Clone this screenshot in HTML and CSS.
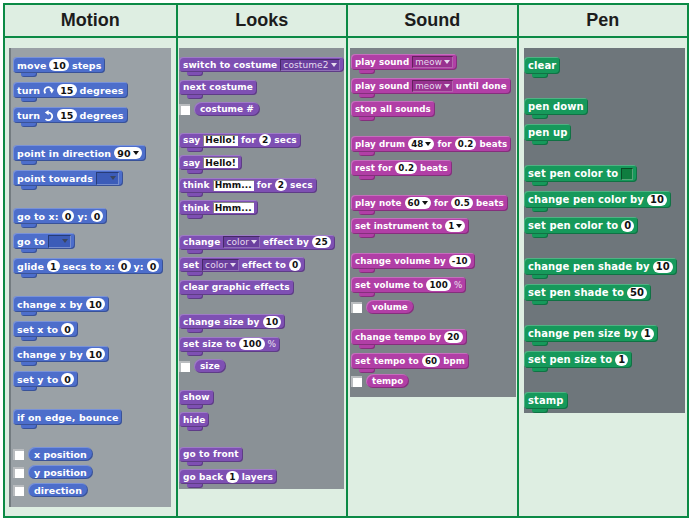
FILE: index.html
```html
<!DOCTYPE html>
<html lang="en">

<head>
    <meta charset="UTF-8">
    <title>Scratch block palettes</title>
    <link rel="stylesheet" href="styles.css">
</head>

<body>
    <div class="chart">
        <div class="head">Motion</div>
        <div class="head">Looks</div>
        <div class="head">Sound</div>
        <div class="head">Pen</div>

        <!-- Motion -->
        <div class="cell">
            <div class="palette motion">
                <div class="blk">move <span class="num">10</span> steps</div>
                <div class="blk">turn
                    <svg class="ico" viewBox="0 0 11 11"><path d="M2.4 8.4 A3.8 3.8 0 1 1 9 5.2" fill="none" stroke="#fff" stroke-width="1.8"/><path d="M6.4 4.6 L11 4.6 L8.8 8.4 Z" fill="#fff"/></svg>
                    <span class="num">15</span> degrees</div>
                <div class="blk">turn
                    <svg class="ico" viewBox="0 0 11 11"><path d="M5 2.6 A3.8 3.8 0 1 1 2.6 9" fill="none" stroke="#fff" stroke-width="1.8"/><path d="M5.6 0 L1.8 2.6 L5.6 5.2 Z" fill="#fff"/></svg>
                    <span class="num">15</span> degrees</div>
                <div class="blk grp">point in direction <span class="num drop">90</span></div>
                <div class="blk">point towards <span class="menu"></span></div>
                <div class="blk grp">go to x: <span class="num">0</span> y: <span class="num">0</span></div>
                <div class="blk">go to <span class="menu"></span></div>
                <div class="blk">glide <span class="num">1</span> secs to x: <span class="num">0</span> y: <span class="num">0</span></div>
                <div class="blk grp">change x by <span class="num">10</span></div>
                <div class="blk">set x to <span class="num">0</span></div>
                <div class="blk">change y by <span class="num">10</span></div>
                <div class="blk">set y to <span class="num">0</span></div>
                <div class="blk grp">if on edge, bounce</div>
                <div class="reps grp">
                    <div class="rep-row"><span class="check"></span><span class="rep">x position</span></div>
                    <div class="rep-row"><span class="check"></span><span class="rep">y position</span></div>
                    <div class="rep-row"><span class="check"></span><span class="rep">direction</span></div>
                </div>
            </div>
        </div>

        <!-- Looks -->
        <div class="cell">
            <div class="palette looks">
                <div class="blk">switch to costume <span class="dd">costume2</span></div>
                <div class="blk">next costume</div>
                <div class="rep-row"><span class="check"></span><span class="rep">costume #</span></div>
                <div class="blk grp sm">say <span class="txt">Hello!</span> for <span class="num">2</span> secs</div>
                <div class="blk">say <span class="txt">Hello!</span></div>
                <div class="blk">think <span class="txt">Hmm...</span> for <span class="num">2</span> secs</div>
                <div class="blk">think <span class="txt">Hmm...</span></div>
                <div class="blk grp">change <span class="dd">color</span> effect by <span class="num">25</span></div>
                <div class="blk">set <span class="dd">color</span> effect to <span class="num">0</span></div>
                <div class="blk">clear graphic effects</div>
                <div class="blk grp">change size by <span class="num">10</span></div>
                <div class="blk">set size to <span class="num">100</span> <span class="thin">%</span></div>
                <div class="rep-row"><span class="check"></span><span class="rep">size</span></div>
                <div class="blk grp sm">show</div>
                <div class="blk">hide</div>
                <div class="blk grp">go to front</div>
                <div class="blk">go back <span class="num">1</span> layers</div>
            </div>
        </div>

        <!-- Sound -->
        <div class="cell">
            <div class="palette sound">
                <div class="blk">play sound <span class="dd">meow</span></div>
                <div class="blk">play sound <span class="dd">meow</span> until done</div>
                <div class="blk">stop all sounds</div>
                <div class="blk grp">play drum <span class="num drop">48</span> for <span class="num">0.2</span> beats</div>
                <div class="blk">rest for <span class="num">0.2</span> beats</div>
                <div class="blk grp">play note <span class="num drop">60</span> for <span class="num">0.5</span> beats</div>
                <div class="blk">set instrument to <span class="num drop">1</span></div>
                <div class="blk grp">change volume by <span class="num">-10</span></div>
                <div class="blk">set volume to <span class="num">100</span> <span class="thin">%</span></div>
                <div class="rep-row"><span class="check"></span><span class="rep">volume</span></div>
                <div class="blk grp sm">change tempo by <span class="num">20</span></div>
                <div class="blk">set tempo to <span class="num">60</span> bpm</div>
                <div class="rep-row last"><span class="check"></span><span class="rep">tempo</span></div>
            </div>
        </div>

        <!-- Pen -->
        <div class="cell">
            <div class="palette pen">
                <div class="blk">clear</div>
                <div class="blk grp">pen down</div>
                <div class="blk">pen up</div>
                <div class="blk grp">set pen color to <span class="swatch"></span></div>
                <div class="blk">change pen color by <span class="num">10</span></div>
                <div class="blk">set pen color to <span class="num">0</span></div>
                <div class="blk grp">change pen shade by <span class="num">10</span></div>
                <div class="blk">set pen shade to <span class="num">50</span></div>
                <div class="blk grp">change pen size by <span class="num">1</span></div>
                <div class="blk">set pen size to <span class="num">1</span></div>
                <div class="blk grp">stamp</div>
            </div>
        </div>
    </div>
</body>

</html>
```

FILE: styles.css
```css
body {
    margin: 0;
    background-color: #fff;
    font-family: 'DejaVu Sans', sans-serif;
}

.chart {
    display: grid;
    grid-template-columns: repeat(4, 1fr);
    width: 682px;
    margin: 3px;
    border: 2px solid #0b8a45;
    background-color: #deeee2;
}

.head {
    height: 31px;
    display: flex;
    align-items: center;
    justify-content: center;
    border-bottom: 2px solid #0b8a45;
    font-family: 'Liberation Sans', Arial, sans-serif;
    font-weight: bold;
    font-size: 18px;
    color: #1c1c1c;
}

.head + .head,
.cell + .cell {
    border-left: 2px solid #0b8a45;
}

.cell {
    height: 478px;
    box-sizing: border-box;
    padding-top: 10px;
}

/* palette panels */
.palette {
    box-sizing: border-box;
    display: flex;
    flex-direction: column;
    align-items: flex-start;
    gap: var(--gap);
    background-color: var(--bg);
    color: #fff;
    font-weight: bold;
    font-size: var(--fs);
}

.motion {
    --bg: #9aa1a6;
    --c: #4d6ecb;
    --cd: #3c5cb8;
    --h: 16px;
    --gap: 9px;
    --fs: 9.5px;
    width: 162px;
    height: 459px;
    margin-left: 4px;
    padding: 9px 0 0 2px;
    border-left: 2px solid #737b80;
}

.looks {
    --bg: #8a9196;
    --c: #7e50b3;
    --cd: #6a3f9e;
    --h: 15px;
    --gap: 7.5px;
    --fs: 9px;
    width: 165px;
    height: 441px;
    margin-left: 1.5px;
    padding: 9px 0 0 0;
}

.sound {
    --bg: #7c8388;
    --c: #b13fa6;
    --cd: #983290;
    --h: 16px;
    --gap: 7.5px;
    --fs: 8.7px;
    width: 166px;
    height: 349px;
    margin-left: 2px;
    padding: 6px 0 0 1px;
}

.pen {
    --bg: #6e767b;
    --c: #16995b;
    --cd: #0f7f4a;
    --h: 17px;
    --gap: 9px;
    --fs: 10px;
    width: 161px;
    height: 365px;
    margin-left: 5.5px;
    padding: 9px 0 0 0;
}

.motion .grp { margin-top: 13px; }
.looks .grp { margin-top: 12px; }
.looks .grp.sm { margin-top: 9px; }
.sound .grp { margin-top: 11.5px; }
.sound .grp.sm { margin-top: 7.5px; }
.sound .last { margin-top: -2px; }
.pen .grp { margin-top: 15px; }

/* stack blocks */
.blk {
    position: relative;
    display: inline-flex;
    align-items: center;
    gap: 3px;
    height: var(--h);
    padding: 0 4px;
    background-color: var(--c);
    border-radius: 4px;
    white-space: nowrap;
    letter-spacing: 0.1px;
    box-shadow: inset 1px 1px 0 rgba(255, 255, 255, 0.25), inset -1px -1px 0 rgba(0, 0, 0, 0.25);
}

.blk::after {
    content: "";
    position: absolute;
    left: 8px;
    bottom: -4px;
    width: 16px;
    height: 4px;
    background-color: var(--c);
    border-radius: 0 0 3px 3px;
    box-shadow: inset -1px -1px 0 rgba(0, 0, 0, 0.25);
}

.ico {
    width: 11px;
    height: 11px;
}

.num {
    display: inline-flex;
    align-items: center;
    justify-content: center;
    min-width: 6px;
    height: 12px;
    padding: 0 3px;
    border-radius: 6px;
    background-color: #fff;
    color: #111;
}

.drop::after,
.dd::after,
.menu::after {
    content: "";
    margin-left: 2px;
    border-left: 3px solid transparent;
    border-right: 3px solid transparent;
    border-top: 4px solid currentColor;
}

.txt {
    display: inline-flex;
    align-items: center;
    height: 11px;
    padding: 0 2px;
    background-color: #fff;
    color: #111;
    box-shadow: inset 1px 1px 0 #888;
}

.dd {
    display: inline-flex;
    align-items: center;
    height: 12px;
    padding: 0 3px;
    background-color: var(--cd);
    color: #e6dcef;
    font-weight: normal;
    box-shadow: inset 1px 1px 0 rgba(0, 0, 0, 0.35), inset -1px -1px 0 rgba(255, 255, 255, 0.25);
}

.menu {
    display: inline-flex;
    align-items: center;
    justify-content: flex-end;
    width: 20px;
    height: 13px;
    padding-right: 3px;
    background-color: var(--cd);
    color: #3a4660;
    box-shadow: inset 1px 1px 0 rgba(0, 0, 0, 0.35), inset -1px -1px 0 rgba(255, 255, 255, 0.3);
}

.thin {
    font-weight: normal;
    color: #e8e0ee;
}

.swatch {
    width: 12px;
    height: 12px;
    background-color: #0f7d3f;
    box-shadow: inset 1px 1px 0 rgba(0, 0, 0, 0.4), inset -1px -1px 0 rgba(255, 255, 255, 0.3);
}

/* reporters with checkbox */
.reps {
    display: flex;
    flex-direction: column;
    gap: 4px;
}

.rep-row {
    display: flex;
    align-items: center;
    gap: 4px;
}

.check {
    width: 11px;
    height: 11px;
    background-color: #fff;
    box-shadow: inset 2px 2px 0 #b9bcbf;
}

.rep {
    display: inline-flex;
    align-items: center;
    height: 14px;
    padding: 0 6px;
    border-radius: 7px;
    background-color: var(--c);
    box-shadow: inset 1px 1px 0 rgba(255, 255, 255, 0.25), inset -1px -1px 0 rgba(0, 0, 0, 0.25);
}
```
